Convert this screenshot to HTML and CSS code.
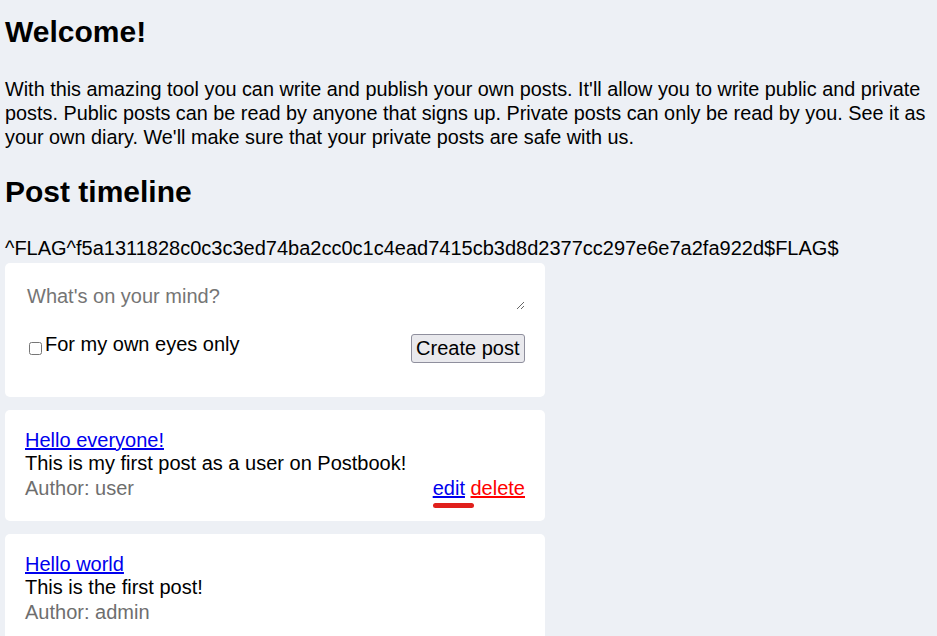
FILE: index.html
```html
<!DOCTYPE html>
<html lang="en">
<head>
<meta charset="utf-8">
<title>Postbook</title>
<link rel="stylesheet" href="styles.css">
</head>
<body>
<h1 class="title">Welcome!</h1>
<p class="intro">With this amazing tool you can write and publish your own posts. It'll allow you to write public and private posts. Public posts can be read by anyone that signs up. Private posts can only be read by you. See it as your own diary. We'll make sure that your private posts are safe with us.</p>
<h2 class="title title-2">Post timeline</h2>
<p class="flag">^FLAG^f5a1311828c0c3c3ed74ba2cc0c1c4ead7415cb3d8d2377cc297e6e7a2fa922d$FLAG$</p>

<div class="card composer">
  <textarea class="composer-input" rows="1" placeholder="What's on your mind?"></textarea>
  <div class="composer-row">
    <label class="private"><input type="checkbox" class="private-box">For my own eyes only</label>
    <button class="create-btn" type="button">Create post</button>
  </div>
</div>

<div class="card post">
  <a class="post-title" href="#">Hello everyone!</a>
  <div class="post-body">This is my first post as a user on Postbook!</div>
  <div class="post-foot">
    <span class="author">Author: user</span>
    <span class="actions"><a class="edit" href="#">edit</a> <a class="delete" href="#">delete</a><span class="marker"></span></span>
  </div>
</div>

<div class="card post">
  <a class="post-title" href="#">Hello world</a>
  <div class="post-body">This is the first post!</div>
  <div class="post-foot">
    <span class="author">Author: admin</span>
  </div>
</div>
</body>
</html>
```

FILE: styles.css
```css
html, body {
  margin: 0;
  padding: 0;
}
body {
  background: #edf0f5;
  color: #000;
  font-family: "Liberation Sans", Arial, sans-serif;
  font-size: 20px;
  padding: 15px 5px 0;
}
.title {
  font-size: 30px;
  font-weight: bold;
  line-height: 34.5px;
  margin: 0;
}
.intro {
  margin: 27.5px 0 0;
  line-height: 24px;
  font-size: 19.84px;
}
.title-2 {
  margin-top: 26px;
}
.flag {
  margin: 26.5px 0 3px;
  line-height: 24px;
  font-size: 20px;
}
.card {
  width: 500px;
  background: #fff;
  border-radius: 5px;
  padding: 20px;
  margin-bottom: 13px;
}
.composer-input {
  display: block;
  box-sizing: border-box;
  width: 500px;
  height: 27px;
  border: none;
  padding: 2px;
  margin: 0;
  font-family: "Liberation Sans", Arial, sans-serif;
  font-size: 20px;
  line-height: 23px;
  resize: vertical;
  outline: none;
  background: #fff;
}
.composer-input::placeholder {
  color: #757575;
}
.composer-row {
  display: flex;
  justify-content: space-between;
  align-items: flex-start;
  margin-top: 24px;
  margin-bottom: 14px;
}
.private {
  margin-top: -1px;
  line-height: 23px;
}
.private-box {
  width: 13px;
  height: 13px;
  margin: 3px 3px 2px 4px;
  vertical-align: -4px;
}
.create-btn {
  font-family: "Liberation Sans", Arial, sans-serif;
  font-size: 20px;
  line-height: 23px;
  color: #000;
  background: #e9e9ed;
  border: 1px solid #8f8f9d;
  border-radius: 3px;
  padding: 2px 4.5px;
  margin: 0;
}
.post {
  line-height: 23px;
  padding-top: 19px;
  padding-bottom: 21px;
}
.post-title {
  color: #0000ee;
  text-decoration: underline;
}
.post-foot {
  display: flex;
  justify-content: space-between;
  align-items: baseline;
  margin-top: 2px;
}
.author {
  color: #6e6e6e;
}
.actions {
  position: relative;
}
.edit {
  color: #0000ee;
}
.delete {
  color: #ff0000;
}
.marker {
  position: absolute;
  left: 0;
  top: 26px;
  width: 41px;
  height: 5px;
  border-radius: 3px;
  background: #e0201c;
}
```
